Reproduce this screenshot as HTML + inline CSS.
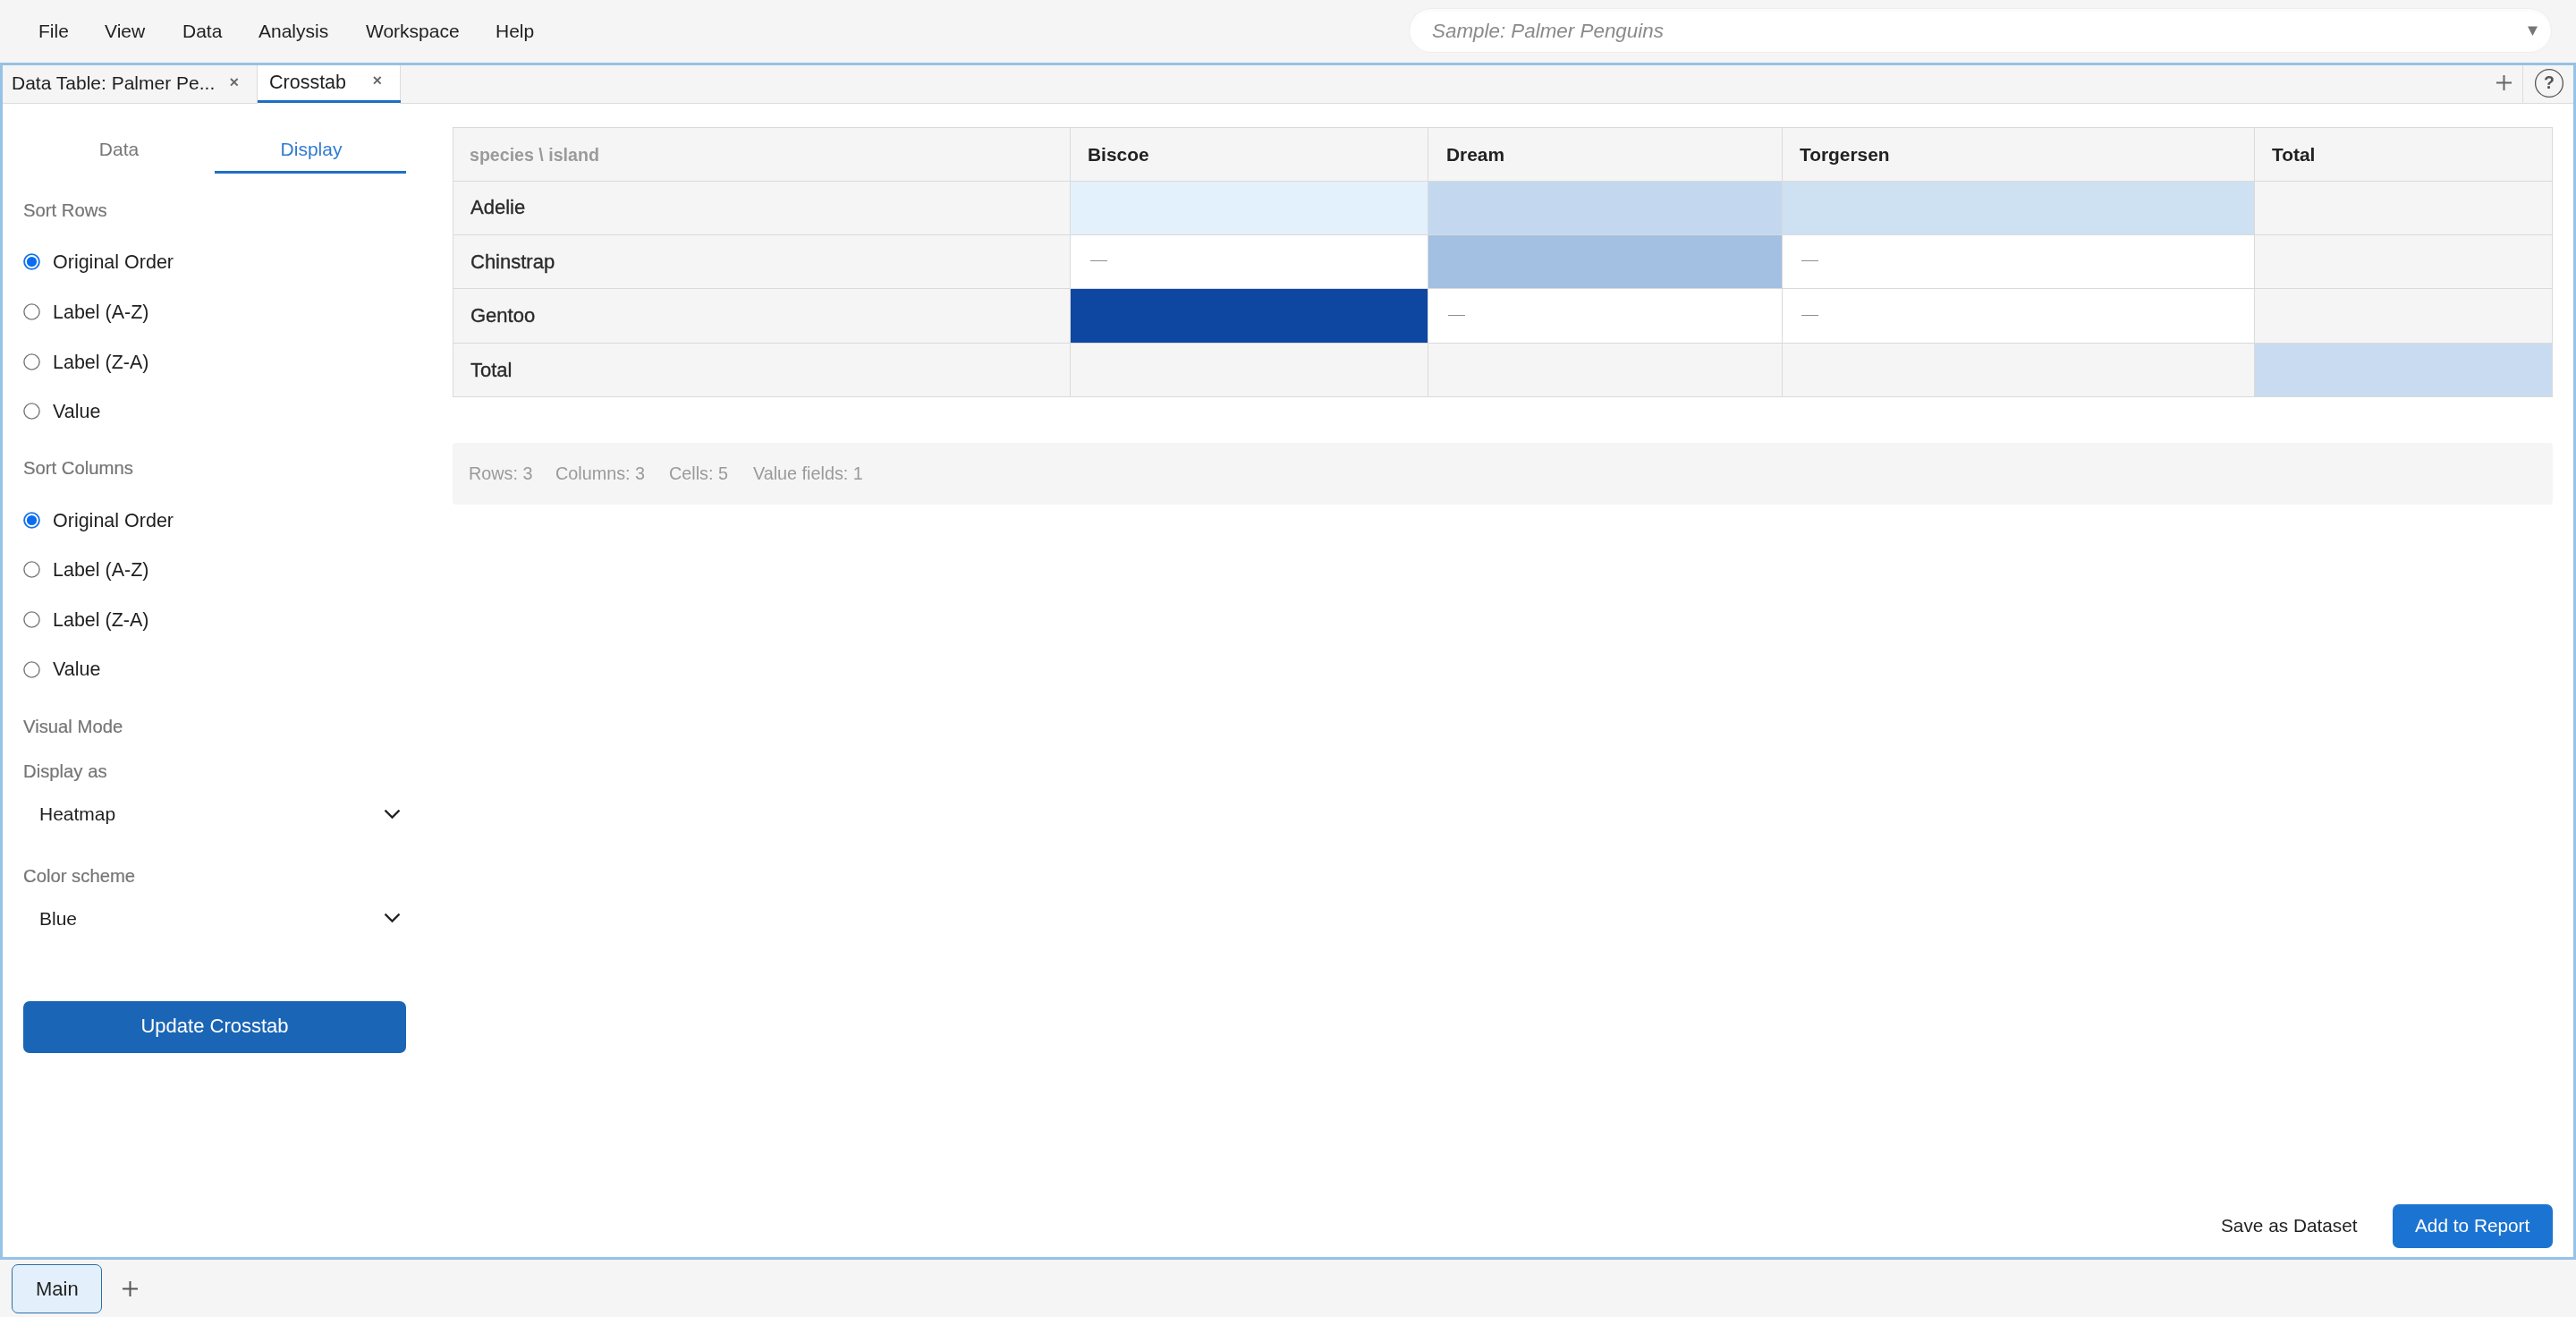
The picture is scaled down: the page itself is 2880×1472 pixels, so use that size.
<!DOCTYPE html>
<html><head><meta charset="utf-8"><title>Crosstab</title>
<style>
html,body{margin:0;padding:0;}
body{width:2880px;height:1472px;position:relative;overflow:hidden;background:#f5f5f5;font-family:"Liberation Sans",sans-serif;}
.t{position:absolute;white-space:nowrap;will-change:transform;}
.r{position:absolute;}
svg.r{overflow:visible;}
@media (max-width:2000px){body{zoom:0.5;}}
</style></head><body>
<div class="r" style="left:0px;top:0px;width:2880px;height:70px;background:#f5f5f5;"></div>
<div class="t" style="left:43.25px;top:22.00px;font-size:21px;line-height:25.2px;color:#1f1f1f;font-weight:400;font-style:normal;">File</div>
<div class="t" style="left:117.00px;top:22.00px;font-size:21px;line-height:25.2px;color:#1f1f1f;font-weight:400;font-style:normal;">View</div>
<div class="t" style="left:204.40px;top:22.00px;font-size:21px;line-height:25.2px;color:#1f1f1f;font-weight:400;font-style:normal;">Data</div>
<div class="t" style="left:288.80px;top:22.00px;font-size:21px;line-height:25.2px;color:#1f1f1f;font-weight:400;font-style:normal;">Analysis</div>
<div class="t" style="left:408.50px;top:22.00px;font-size:21px;line-height:25.2px;color:#1f1f1f;font-weight:400;font-style:normal;">Workspace</div>
<div class="t" style="left:553.70px;top:22.00px;font-size:21px;line-height:25.2px;color:#1f1f1f;font-weight:400;font-style:normal;">Help</div>
<div class="r" style="left:1576px;top:10px;width:1276px;height:48px;background:#fff;border-radius:24px;box-shadow:0 0 0 1px #eeeeee, inset 0 2px 4px rgba(0,0,0,0.025);"></div>
<div class="t" style="left:1600.50px;top:22.00px;font-size:22.4px;line-height:26.88px;color:#8a8a8a;font-weight:400;font-style:italic;">Sample: Palmer Penguins</div>
<svg class="r" style="left:2825px;top:28px" width="13" height="13" viewBox="0 0 13 13"><path d="M1 1.5 L12 1.5 L6.5 12 Z" fill="#777"/></svg>
<div class="r" style="left:0px;top:70px;width:2880px;height:1338px;background:#fff;box-sizing:border-box;border:3px solid #96c2e6;"></div>
<div class="r" style="left:3px;top:73px;width:2874px;height:43px;background:#f5f5f5;box-sizing:border-box;border-bottom:1px solid #dcdcdc;"></div>
<div class="r" style="left:287px;top:73px;width:161px;height:43px;background:#fff;box-sizing:border-box;border-left:1px solid #dcdcdc;border-right:1px solid #dcdcdc;"></div>
<div class="r" style="left:288px;top:112px;width:160px;height:3px;background:#1b6ec2;"></div>
<div class="t" style="left:13.00px;top:80.00px;font-size:21px;line-height:25.2px;color:#1f1f1f;font-weight:400;font-style:normal;">Data Table: Palmer Pe...</div>
<div class="t" style="left:300.50px;top:80.00px;font-size:21.5px;line-height:25.8px;color:#1f1f1f;font-weight:400;font-style:normal;">Crosstab</div>
<svg class="r" style="left:255.59999999999997px;top:86.3px" width="11.6" height="11.6" viewBox="0 0 11.6 11.6"><path d="M2 2 L9.6 9.6 M9.6 2 L2 9.6" stroke="#666" stroke-width="1.9" fill="none"/></svg>
<svg class="r" style="left:415.5px;top:84.3px" width="11.6" height="11.6" viewBox="0 0 11.6 11.6"><path d="M2 2 L9.6 9.6 M9.6 2 L2 9.6" stroke="#666" stroke-width="1.9" fill="none"/></svg>
<svg class="r" style="left:2790.5px;top:84.0px" width="17" height="17" viewBox="0 0 17 17"><path d="M0 8.5 L17 8.5 M8.5 0 L8.5 17" stroke="#666" stroke-width="2" fill="none"/></svg>
<div class="r" style="left:2820px;top:73px;width:1px;height:42px;background:#dcdcdc;"></div>
<svg class="r" style="left:2832px;top:75px" width="36" height="36" viewBox="0 0 36 36"><circle cx="18" cy="18.0" r="15.4" stroke="#555" stroke-width="1.3" fill="none"/></svg>
<div class="t" style="left:2835.20px;width:30px;text-align:center;top:81.00px;font-size:19.5px;line-height:23.4px;color:#555;font-weight:700;font-style:normal;">?</div>
<div class="t" style="left:33.00px;width:200px;text-align:center;top:154.00px;font-size:21px;line-height:25.2px;color:#777;font-weight:400;font-style:normal;">Data</div>
<div class="t" style="left:247.50px;width:200px;text-align:center;top:154.00px;font-size:21px;line-height:25.2px;color:#2f7bd0;font-weight:400;font-style:normal;">Display</div>
<div class="r" style="left:240px;top:191px;width:214px;height:3px;background:#1f6fc5;"></div>
<div class="t" style="left:25.80px;top:223.00px;font-size:20.3px;line-height:24.36px;color:#757575;font-weight:400;font-style:normal;-webkit-text-stroke:0.2px #757575;">Sort Rows</div>
<svg class="r" style="left:25.1px;top:281.8px" width="21" height="21" viewBox="0 0 21 21"><circle cx="10.5" cy="10.5" r="8.4" stroke="#1673e6" stroke-width="1.9" fill="#fff"/><circle cx="10.5" cy="10.5" r="5.6" fill="#0a6cf2"/></svg>
<div class="t" style="left:59.00px;top:281.00px;font-size:21.5px;line-height:25.8px;color:#1f1f1f;font-weight:400;font-style:normal;">Original Order</div>
<svg class="r" style="left:25.1px;top:337.9px" width="21" height="21" viewBox="0 0 21 21"><circle cx="10.5" cy="10.5" r="8.6" stroke="#767676" stroke-width="1.4" fill="#fff"/></svg>
<div class="t" style="left:59.00px;top:337.00px;font-size:21.5px;line-height:25.8px;color:#1f1f1f;font-weight:400;font-style:normal;">Label (A-Z)</div>
<svg class="r" style="left:25.1px;top:393.8px" width="21" height="21" viewBox="0 0 21 21"><circle cx="10.5" cy="10.5" r="8.6" stroke="#767676" stroke-width="1.4" fill="#fff"/></svg>
<div class="t" style="left:59.00px;top:393.00px;font-size:21.5px;line-height:25.8px;color:#1f1f1f;font-weight:400;font-style:normal;">Label (Z-A)</div>
<svg class="r" style="left:25.1px;top:449.0px" width="21" height="21" viewBox="0 0 21 21"><circle cx="10.5" cy="10.5" r="8.6" stroke="#767676" stroke-width="1.4" fill="#fff"/></svg>
<div class="t" style="left:59.00px;top:448.00px;font-size:21.5px;line-height:25.8px;color:#1f1f1f;font-weight:400;font-style:normal;">Value</div>
<div class="t" style="left:25.80px;top:511.00px;font-size:20.3px;line-height:24.36px;color:#757575;font-weight:400;font-style:normal;-webkit-text-stroke:0.2px #757575;">Sort Columns</div>
<svg class="r" style="left:25.1px;top:571.0px" width="21" height="21" viewBox="0 0 21 21"><circle cx="10.5" cy="10.5" r="8.4" stroke="#1673e6" stroke-width="1.9" fill="#fff"/><circle cx="10.5" cy="10.5" r="5.6" fill="#0a6cf2"/></svg>
<div class="t" style="left:59.00px;top:570.00px;font-size:21.5px;line-height:25.8px;color:#1f1f1f;font-weight:400;font-style:normal;">Original Order</div>
<svg class="r" style="left:25.1px;top:626.1px" width="21" height="21" viewBox="0 0 21 21"><circle cx="10.5" cy="10.5" r="8.6" stroke="#767676" stroke-width="1.4" fill="#fff"/></svg>
<div class="t" style="left:59.00px;top:625.00px;font-size:21.5px;line-height:25.8px;color:#1f1f1f;font-weight:400;font-style:normal;">Label (A-Z)</div>
<svg class="r" style="left:25.1px;top:681.9px" width="21" height="21" viewBox="0 0 21 21"><circle cx="10.5" cy="10.5" r="8.6" stroke="#767676" stroke-width="1.4" fill="#fff"/></svg>
<div class="t" style="left:59.00px;top:681.00px;font-size:21.5px;line-height:25.8px;color:#1f1f1f;font-weight:400;font-style:normal;">Label (Z-A)</div>
<svg class="r" style="left:25.1px;top:737.8px" width="21" height="21" viewBox="0 0 21 21"><circle cx="10.5" cy="10.5" r="8.6" stroke="#767676" stroke-width="1.4" fill="#fff"/></svg>
<div class="t" style="left:59.00px;top:736.00px;font-size:21.5px;line-height:25.8px;color:#1f1f1f;font-weight:400;font-style:normal;">Value</div>
<div class="t" style="left:25.80px;top:800.00px;font-size:20.3px;line-height:24.36px;color:#757575;font-weight:400;font-style:normal;-webkit-text-stroke:0.2px #757575;">Visual Mode</div>
<div class="t" style="left:25.80px;top:850.00px;font-size:20.3px;line-height:24.36px;color:#757575;font-weight:400;font-style:normal;-webkit-text-stroke:0.2px #757575;">Display as</div>
<div class="t" style="left:44.00px;top:897.00px;font-size:21px;line-height:25.2px;color:#1f1f1f;font-weight:400;font-style:normal;">Heatmap</div>
<svg class="r" style="left:429px;top:904px" width="19" height="12" viewBox="0 0 19 12"><path d="M1.5 1.6 L9.5 9.6 L17.5 1.6" stroke="#222" stroke-width="2.2" fill="none"/></svg>
<div class="t" style="left:25.80px;top:967.00px;font-size:20.3px;line-height:24.36px;color:#757575;font-weight:400;font-style:normal;-webkit-text-stroke:0.2px #757575;">Color scheme</div>
<div class="t" style="left:44.00px;top:1014.00px;font-size:21px;line-height:25.2px;color:#1f1f1f;font-weight:400;font-style:normal;">Blue</div>
<svg class="r" style="left:429px;top:1020px" width="19" height="12" viewBox="0 0 19 12"><path d="M1.5 1.6 L9.5 9.6 L17.5 1.6" stroke="#222" stroke-width="2.2" fill="none"/></svg>
<div class="r" style="left:26px;top:1119px;width:428px;height:58px;background:#1a65b5;border-radius:7px;"></div>
<div class="t" style="left:90.20px;width:300px;text-align:center;top:1134.00px;font-size:22px;line-height:26.4px;color:#fff;font-weight:400;font-style:normal;">Update Crosstab</div>
<div class="r" style="left:506px;top:142px;width:691px;height:61px;background:#f5f5f5;"></div>
<div class="r" style="left:1196px;top:142px;width:401px;height:61px;background:#f5f5f5;"></div>
<div class="r" style="left:1596px;top:142px;width:397px;height:61px;background:#f5f5f5;"></div>
<div class="r" style="left:1992px;top:142px;width:529px;height:61px;background:#f5f5f5;"></div>
<div class="r" style="left:2520px;top:142px;width:334px;height:61px;background:#f5f5f5;"></div>
<div class="r" style="left:506px;top:202px;width:691px;height:61px;background:#f5f5f5;"></div>
<div class="r" style="left:1196px;top:202px;width:401px;height:61px;background:#e3f1fc;"></div>
<div class="r" style="left:1596px;top:202px;width:397px;height:61px;background:#c3d8ee;"></div>
<div class="r" style="left:1992px;top:202px;width:529px;height:61px;background:#cee1f3;"></div>
<div class="r" style="left:2520px;top:202px;width:334px;height:61px;background:#f5f5f5;"></div>
<div class="r" style="left:506px;top:262px;width:691px;height:61px;background:#f5f5f5;"></div>
<div class="r" style="left:1196px;top:262px;width:401px;height:61px;background:#ffffff;"></div>
<div class="r" style="left:1596px;top:262px;width:397px;height:61px;background:#a3bfe2;"></div>
<div class="r" style="left:1992px;top:262px;width:529px;height:61px;background:#ffffff;"></div>
<div class="r" style="left:2520px;top:262px;width:334px;height:61px;background:#f5f5f5;"></div>
<div class="r" style="left:506px;top:322px;width:691px;height:62px;background:#f5f5f5;"></div>
<div class="r" style="left:1196px;top:322px;width:401px;height:62px;background:#0d47a1;"></div>
<div class="r" style="left:1596px;top:322px;width:397px;height:62px;background:#ffffff;"></div>
<div class="r" style="left:1992px;top:322px;width:529px;height:62px;background:#ffffff;"></div>
<div class="r" style="left:2520px;top:322px;width:334px;height:62px;background:#f5f5f5;"></div>
<div class="r" style="left:506px;top:383px;width:691px;height:61px;background:#f5f5f5;"></div>
<div class="r" style="left:1196px;top:383px;width:401px;height:61px;background:#f5f5f5;"></div>
<div class="r" style="left:1596px;top:383px;width:397px;height:61px;background:#f5f5f5;"></div>
<div class="r" style="left:1992px;top:383px;width:529px;height:61px;background:#f5f5f5;"></div>
<div class="r" style="left:2520px;top:383px;width:334px;height:61px;background:#c8dbf0;"></div>
<div class="r" style="left:506px;top:142px;width:1px;height:302px;background:#dadada;"></div>
<div class="r" style="left:1196px;top:142px;width:1px;height:302px;background:#dadada;"></div>
<div class="r" style="left:1596px;top:142px;width:1px;height:302px;background:#dadada;"></div>
<div class="r" style="left:1992px;top:142px;width:1px;height:302px;background:#dadada;"></div>
<div class="r" style="left:2520px;top:142px;width:1px;height:302px;background:#dadada;"></div>
<div class="r" style="left:2853px;top:142px;width:1px;height:302px;background:#dadada;"></div>
<div class="r" style="left:506px;top:142px;width:2348px;height:1px;background:#dadada;"></div>
<div class="r" style="left:506px;top:202px;width:2348px;height:1px;background:#dadada;"></div>
<div class="r" style="left:506px;top:262px;width:2348px;height:1px;background:#dadada;"></div>
<div class="r" style="left:506px;top:322px;width:2348px;height:1px;background:#dadada;"></div>
<div class="r" style="left:506px;top:383px;width:2348px;height:1px;background:#dadada;"></div>
<div class="r" style="left:506px;top:443px;width:2348px;height:1px;background:#dadada;"></div>
<div class="t" style="left:525.00px;top:162.00px;font-size:19.6px;line-height:23.52px;color:#9a9a9a;font-weight:700;font-style:normal;">species \ island</div>
<div class="t" style="left:1215.80px;top:160.00px;font-size:20.9px;line-height:25.08px;color:#222;font-weight:700;font-style:normal;">Biscoe</div>
<div class="t" style="left:1616.50px;top:160.00px;font-size:20.9px;line-height:25.08px;color:#222;font-weight:700;font-style:normal;">Dream</div>
<div class="t" style="left:2011.90px;top:160.00px;font-size:20.9px;line-height:25.08px;color:#222;font-weight:700;font-style:normal;">Torgersen</div>
<div class="t" style="left:2540.10px;top:160.00px;font-size:20.9px;line-height:25.08px;color:#222;font-weight:700;font-style:normal;">Total</div>
<div class="t" style="left:526.00px;top:219.00px;font-size:22px;line-height:26.4px;color:#2a2a2a;font-weight:400;font-style:normal;-webkit-text-stroke:0.35px #2a2a2a;">Adelie</div>
<div class="t" style="left:526.00px;top:280.00px;font-size:22px;line-height:26.4px;color:#2a2a2a;font-weight:400;font-style:normal;-webkit-text-stroke:0.35px #2a2a2a;">Chinstrap</div>
<div class="t" style="left:526.00px;top:340.00px;font-size:22px;line-height:26.4px;color:#2a2a2a;font-weight:400;font-style:normal;-webkit-text-stroke:0.35px #2a2a2a;">Gentoo</div>
<div class="t" style="left:526.00px;top:401.00px;font-size:22px;line-height:26.4px;color:#2a2a2a;font-weight:400;font-style:normal;-webkit-text-stroke:0.35px #2a2a2a;">Total</div>
<div class="r" style="left:1219px;top:291px;width:19px;height:1px;background:#8f8f8f;"></div>
<div class="r" style="left:1619px;top:352px;width:19px;height:1px;background:#8f8f8f;"></div>
<div class="r" style="left:2014px;top:291px;width:19px;height:1px;background:#8f8f8f;"></div>
<div class="r" style="left:2014px;top:352px;width:19px;height:1px;background:#8f8f8f;"></div>
<div class="r" style="left:506px;top:495px;width:2348px;height:68.5px;background:#f5f5f5;border-radius:4px;"></div>
<div class="t" style="left:524.20px;top:518.00px;font-size:19.8px;line-height:23.76px;color:#9a9a9a;font-weight:400;font-style:normal;">Rows: 3</div>
<div class="t" style="left:620.60px;top:518.00px;font-size:19.8px;line-height:23.76px;color:#9a9a9a;font-weight:400;font-style:normal;">Columns: 3</div>
<div class="t" style="left:748.20px;top:518.00px;font-size:19.8px;line-height:23.76px;color:#9a9a9a;font-weight:400;font-style:normal;">Cells: 5</div>
<div class="t" style="left:841.90px;top:518.00px;font-size:19.8px;line-height:23.76px;color:#9a9a9a;font-weight:400;font-style:normal;">Value fields: 1</div>
<div class="t" style="left:2483.00px;top:1358.00px;font-size:20.8px;line-height:24.96px;color:#1f1f1f;font-weight:400;font-style:normal;">Save as Dataset</div>
<div class="r" style="left:2675px;top:1346px;width:179px;height:49px;background:#1c74d2;border-radius:7px;"></div>
<div class="t" style="left:2700.00px;top:1358.00px;font-size:20.8px;line-height:24.96px;color:#fff;font-weight:400;font-style:normal;">Add to Report</div>
<div class="r" style="left:0px;top:1408px;width:2880px;height:64px;background:#f5f5f5;"></div>
<div class="r" style="left:13px;top:1413px;width:101px;height:54.5px;background:#e3f0fb;box-sizing:border-box;border:1.5px solid #2e6ea6;border-radius:7px;"></div>
<div class="t" style="left:39.50px;top:1428.00px;font-size:22px;line-height:26.4px;color:#1f1f1f;font-weight:400;font-style:normal;">Main</div>
<svg class="r" style="left:137.1px;top:1432.3px" width="17" height="17" viewBox="0 0 17 17"><path d="M0 8.5 L17 8.5 M8.5 0 L8.5 17" stroke="#555" stroke-width="2" fill="none"/></svg>
</body></html>
